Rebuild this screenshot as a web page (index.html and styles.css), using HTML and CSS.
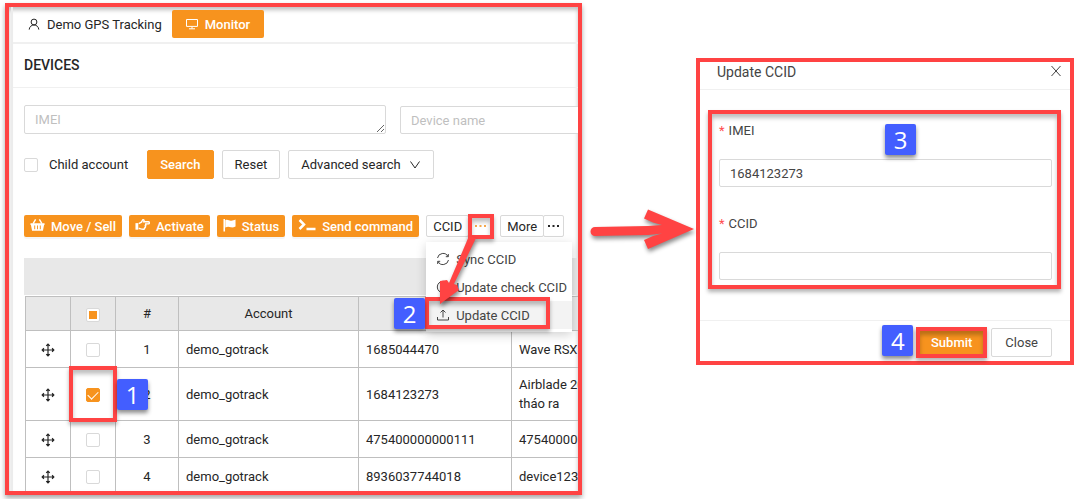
FILE: index.html
```html
<!DOCTYPE html>
<html lang="en">
<head>
<meta charset="utf-8">
<title>Update CCID guide</title>
<link rel="stylesheet" href="styles.css">
</head>
<body>
<main class="guide">
  <section class="panel">
    <div class="page">
      <nav class="tabs">
        <a class="tab" href="#account"><svg class="icon" viewBox="0 0 12 12"><circle cx="6" cy="4" r="2.9"/><path d="M1.2 11.6C1.4 8.8 3.4 7 6 7s4.6 1.8 4.8 4.6"/></svg>Demo GPS Tracking</a>
        <a class="tab tab-active" href="#monitor"><svg class="icon" viewBox="0 0 12 12"><path d="M.5 1.500h11v6.900H.5zM6 8.400v2.200M3 10.800h6"/></svg>Monitor</a>
      </nav>
      <h1 class="heading">DEVICES</h1>
      <div class="content">
        <form class="filters">
          <div class="fields">
            <textarea class="control area" rows="1" placeholder="IMEI" aria-label="IMEI"></textarea>
            <input class="control name" type="text" placeholder="Device name" aria-label="Device name">
          </div>
          <div class="actions">
            <label class="child"><input class="check" type="checkbox">Child account</label>
            <button class="btn btn-primary" type="button">Search</button>
            <button class="btn" type="button">Reset</button>
            <button class="btn" type="button">Advanced search<svg class="icon" viewBox="0 0 12 12"><path d="M1.500 2.500 6 9l4.500-6.500"/></svg></button>
          </div>
        </form>
        <div class="toolbar">
          <button class="tool" type="button"><svg class="glyph" viewBox="0 0 16 14"><path d="M.5 5h15v2H15l-1.200 6H2.200L1 7H.5z"/><path class="edge" d="M3.300 5.500 6 1M12.700 5.500 10 1"/><path class="slot" d="M5 7.500v4M8 7.500v4M11 7.500v4"/></svg>Move / Sell</button>
          <button class="tool" type="button"><svg class="glyph" viewBox="0 0 16 14"><path d="M.5 5h3v7h-3z"/><path class="edge" d="M4 5.500 6.800 4l1.500-2.600c1.500-.4 1.600 1 1 2.200h5c1.300 0 1.300 2.200 0 2.200h-3.500c1.200.6 1 1.800.1 2.200.6.8.3 1.700-.6 2 .1 1-.5 1.500-1.500 1.500-2 0-3-.5-4.800-1"/></svg>Activate</button>
          <button class="tool" type="button"><svg class="glyph glyph-flag" viewBox="0 0 14 14"><path d="M2.500 2C5 .4 7 3 9 2.300c1.500-.2 2.700-.6 4.500-1.300v7.500c-2 1-3.500 1.400-5 1-2-.8-3.700-1-6 .2zM.5.5h1.700V14H.5z"/></svg>Status</button>
          <button class="tool" type="button"><svg class="glyph glyph-prompt" viewBox="0 0 18 14"><path class="thick" d="M1.500 2 6 6.500l-4.500 4.500M8.500 11h9"/></svg>Send command</button>
          <div class="split">
            <button class="mini" type="button">CCID</button><button class="mini mini-dots mini-open" type="button" aria-label="CCID actions"><svg class="dots" viewBox="0 0 11 2"><path d="M0 0h2v2H0zM4.500 0h2v2h-2zM9 0h2v2H9z"/></svg></button>
            <span class="mark mark-dots"></span>
            <ul class="menu">
              <li><button class="entry" type="button"><svg class="icon icon-lg" viewBox="0 0 14 14"><path d="M1.500 6A5.600 5.600 0 0 1 12 4.500M12.500 8A5.600 5.600 0 0 1 2 9.500M12.300 2v2.700H9.800M1.700 12V9.300h2.500"/></svg>Sync CCID</button></li>
              <li><button class="entry" type="button"><svg class="icon icon-lg" viewBox="0 0 14 14"><circle cx="7" cy="7" r="5.700"/><path d="M7 3.500V7l2.500 1.500"/></svg>Update check CCID</button></li>
              <li class="chosen"><button class="entry" type="button"><svg class="icon icon-lg" viewBox="0 0 14 14"><path d="M1.500 9v3h11V9M7 9.500V2M4.500 4.500 7 2l2.500 2.500"/></svg>Update CCID</button><span class="mark mark-entry"></span><span class="badge badge-2">2</span></li>
            </ul>
            <svg class="arrow-down" viewBox="0 0 46 70"><path d="M38 0 18 47l-2-3-7 1 0 23 19-14-2-5-3-1L45 2z"/></svg>
          </div>
          <div class="split">
            <button class="mini" type="button">More</button><button class="mini mini-dots" type="button" aria-label="More actions"><svg class="dots" viewBox="0 0 11 2"><path d="M0 0h2v2H0zM4.500 0h2v2h-2zM9 0h2v2H9z"/></svg></button>
          </div>
        </div>
        <div class="strip"></div>
        <table class="devices">
          <colgroup><col class="c-move"><col class="c-check"><col class="c-num"><col class="c-account"><col class="c-imei"><col class="c-name"></colgroup>
          <thead>
            <tr><th></th><th><input class="check check-some" type="checkbox" aria-label="Select all"></th><th>#</th><th>Account</th><th></th><th></th></tr>
          </thead>
          <tbody>
            <tr><td class="mid"><svg class="move" viewBox="0 0 12 12"><path d="M6 1v10M1 6h10M4.500 2.500 6 1l1.500 1.500M4.500 9.500 6 11l1.500-1.500M2.500 4.500 1 6l1.500 1.500M9.500 4.500 11 6 9.500 7.500"/></svg></td><td class="mid"><input class="check" type="checkbox" aria-label="Select row 1"></td><td class="mid">1</td><td>demo_gotrack</td><td>1685044470</td><td>Wave RSX</td></tr>
            <tr><td class="mid"><svg class="move" viewBox="0 0 12 12"><path d="M6 1v10M1 6h10M4.500 2.500 6 1l1.500 1.500M4.500 9.500 6 11l1.500-1.500M2.500 4.500 1 6l1.500 1.500M9.500 4.500 11 6 9.500 7.500"/></svg></td><td class="mid picked"><input class="check" type="checkbox" checked aria-label="Select row 2"><span class="mark mark-check"></span><span class="badge badge-1">1</span></td><td class="mid">2</td><td>demo_gotrack</td><td>1684123273</td><td>Airblade 20<br>tháo ra</td></tr>
            <tr><td class="mid"><svg class="move" viewBox="0 0 12 12"><path d="M6 1v10M1 6h10M4.500 2.500 6 1l1.500 1.500M4.500 9.500 6 11l1.500-1.500M2.500 4.500 1 6l1.500 1.500M9.500 4.500 11 6 9.500 7.500"/></svg></td><td class="mid"><input class="check" type="checkbox" aria-label="Select row 3"></td><td class="mid">3</td><td>demo_gotrack</td><td>475400000000111</td><td>475400000</td></tr>
            <tr><td class="mid"><svg class="move" viewBox="0 0 12 12"><path d="M6 1v10M1 6h10M4.500 2.500 6 1l1.500 1.500M4.500 9.500 6 11l1.500-1.500M2.500 4.500 1 6l1.500 1.500M9.500 4.500 11 6 9.500 7.500"/></svg></td><td class="mid"><input class="check" type="checkbox" aria-label="Select row 4"></td><td class="mid">4</td><td>demo_gotrack</td><td>8936037744018</td><td>device1234</td></tr>
          </tbody>
        </table>
      </div>
    </div>
  </section>

  <svg class="arrow-right" viewBox="0 0 114 50"><path d="M13 23 66 22l14-1-9-2.500-9-4 4-9L112 25 66 45l-4-9 9-4 9-2.500-14 1.500-53 1a4.500 4.500 0 0 1 0-9z"/></svg>

  <form class="dialog">
    <header class="dialog-head"><h2 class="dialog-title">Update CCID</h2><button class="close" type="button" aria-label="Close dialog"><svg class="icon" viewBox="0 0 12 12"><path d="m1.500 1 9 10M10.500 1l-9 10"/></svg></button></header>
    <div class="dialog-body">
      <label class="label" for="imei"><span class="star">*</span>IMEI</label>
      <input class="control" id="imei" type="text" value="1684123273">
      <label class="label" for="ccid"><span class="star">*</span>CCID</label>
      <input class="control" id="ccid" type="text">
      <span class="mark mark-fields"></span>
      <span class="badge badge-3">3</span>
    </div>
    <footer class="dialog-foot">
      <div class="submit"><button class="btn btn-primary" type="button">Submit</button><span class="mark mark-submit"></span><span class="badge badge-4">4</span></div>
      <button class="btn" type="button">Close</button>
    </footer>
  </form>
</main>
</body>
</html>
```
FILE: styles.css
```css
* { box-sizing: border-box; }
body { margin: 0; background: #fff; color: #262626; font: 13px/19px Roboto, "Noto Sans", sans-serif; }
button, input, textarea { font: inherit; color: inherit; }
.guide { display: flex; align-items: flex-start; padding: 3px 17px 4px 5px; }
.icon { width: 12px; height: 12px; flex: none; fill: none; stroke: currentColor; stroke-width: 1; }
.icon-lg { width: 14px; height: 14px; }

/* Devices page */
.panel { flex: 567 1 0; min-width: 0; overflow: hidden; padding-left: 2px; border: 4px solid #ff4343; box-shadow: 0 3px 5px rgba(0,0,0,.35), inset 0 3px 4px rgba(0,0,0,.25); }
.page { border-left: 2px solid #ececec; }
.tabs { display: flex; align-items: flex-start; padding: 3px 15px 4px; border-bottom: 2px solid #f0f0f0; }
.tab { display: flex; align-items: center; gap: 7px; height: 28px; padding: 0 10px 0 0; color: inherit; text-decoration: none; }
.tab-active { padding: 0 14px; border-radius: 2px; background: #f7931e; color: #fff; font-weight: 500; }
.heading { margin: 0; padding: 12px 11px; border-bottom: 1px solid #f0f0f0; font-size: 14px; line-height: 19px; font-weight: 500; }
.content { padding: 17px 0 0 11px; }
.fields { display: flex; align-items: flex-end; gap: 14px; }
.control { display: block; width: 100%; height: 28px; padding: 4px 10px; border: 1px solid #d9d9d9; border-radius: 2px; background: #fff; line-height: 18px; outline: 0; }
.control::placeholder { color: #bfbfbf; }
.area { flex: 0 0 362px; height: 29px; padding-top: 5px; overflow: hidden; resize: vertical; }
.name { flex: 0 0 362px; }
.actions { display: flex; align-items: center; gap: 8px; padding-top: 16px; }
.actions .btn { padding: 0 12px; }
.child { display: flex; align-items: center; gap: 11px; margin-right: 11px; }
.check { appearance: none; display: inline-grid; place-items: center; width: 14px; height: 14px; margin: 0; border: 1px solid #d9d9d9; border-radius: 2px; background: #fff; vertical-align: middle; }
.check:checked { border-color: #f7931e; background: #f7931e; }
.check:checked::after { content: ""; width: 5px; height: 9px; margin-bottom: 3px; border: solid #fff; border-width: 0 1px 1px 0; transform: rotate(45deg); }
.check-some::after { content: ""; width: 8px; height: 8px; background: #f7931e; }
.btn { display: flex; align-items: center; gap: 8px; height: 29px; padding: 0 13px; border: 1px solid #d9d9d9; border-radius: 2px; background: #fff; }
.btn-primary { border-color: #f7931e; background: #f7931e; color: #fff; font-weight: 500; }

.toolbar { display: flex; gap: 7px; padding: 36px 0 21px; white-space: nowrap; }
.tool, .mini { display: flex; align-items: center; height: 22px; border-radius: 2px; }
.tool { gap: 6px; padding: 0 6px; border: 0; background: #f7931e; color: #fff; font-weight: 500; box-shadow: 0 2px 0 rgba(0,0,0,.04); }
.glyph { width: 15px; height: 14px; margin-bottom: 3px; fill: currentColor; }
.edge, .thick { fill: none; stroke: currentColor; stroke-width: 1.5; }
.thick { stroke-width: 2.5; }
.slot { fill: none; stroke: #f7931e; }
.glyph-flag { width: 13px; }
.glyph-prompt { width: 18px; }
.split { position: relative; display: flex; }
.mini { padding: 0 6px; border: 1px solid #d9d9d9; background: #fff; }
.mini-dots { margin-left: -1px; padding: 0 4px; }
.mini-open { color: #f7a94d; }
.mini-open { padding: 0 6px; }
.dots { width: 11px; height: 2px; fill: currentColor; }
.menu { position: absolute; z-index: 2; top: 27px; left: 0; margin: 0; padding: 3px 0; list-style: none; background: #fff; box-shadow: 0 3px 10px rgba(0,0,0,.18); }
.menu li { position: relative; }
.entry { display: flex; align-items: center; gap: 6px; width: 100%; height: 28px; padding: 0 5px 0 10px; border: 0; background: none; color: #444; }
.chosen { background: #f3f3f3; }

.strip { height: 37px; margin-bottom: 1px; background: #e8e8e8; }
.devices { width: 700px; margin: 0 0 -4px 1px; border-collapse: collapse; table-layout: fixed; }
.c-move, .c-check { width: 45px; }
.c-num { width: 63px; }
.c-account { width: 180px; }
.c-imei { width: 153px; }
.devices th, .devices td { height: 37px; padding: 7px; border: 1px solid #bfbfbf; text-align: left; }
.devices th { height: 34px; background: #e8e8e8; font-weight: 400; }
.devices th, .devices .mid { padding: 0; text-align: center; }
.devices .picked { position: relative; }
.move { width: 14px; height: 14px; fill: none; stroke: #222; stroke-width: 1; vertical-align: middle; }

/* Dialog */
.dialog { flex: 370 1 0; min-width: 0; margin-top: 55px; border: 4px solid #ff4343; color: #444; }
.dialog-head { display: flex; align-items: flex-start; justify-content: space-between; height: 28px; padding: 0 8px 0 17px; border-bottom: 1px solid #f0f0f0; }
.dialog-title { margin: 0; font-size: 14px; line-height: 20px; font-weight: 400; }
.close { display: flex; padding: 3px 0; border: 0; background: none; }
.dialog-body { position: relative; display: grid; padding: 30px 18px 40px 19px; }
.label { display: flex; align-items: center; gap: 4px; height: 20px; margin-bottom: 19px; }
.dialog-body .control + .label { margin-top: 26px; margin-bottom: 19px; }
.star { color: #ff4d4f; }
.dialog-foot { display: flex; justify-content: flex-end; gap: 5px; padding: 7px 18px 4px; border-top: 1px solid #f0f0f0; }
.submit { position: relative; }

/* Callouts drawn over the interface */
.mark { position: absolute; z-index: 3; border: 4px solid #ff4343; box-shadow: 0 3px 4px rgba(0,0,0,.3), inset 0 4px 4px rgba(0,0,0,.25); pointer-events: none; }
.mark-dots { top: -1px; right: -1px; width: 26px; height: 25px; }
.mark-entry { top: -4px; right: 22px; left: -1px; height: 32px; }
.mark-check { inset: -2px; }
.mark-fields { inset: 20px 9px 31px 8px; }
.mark-submit { inset: -1px; }
.badge { position: absolute; z-index: 4; width: 31px; height: 31px; border-radius: 2px; background: #435eff; box-shadow: 0 3px 4px rgba(0,0,0,.45); color: #fff; font: 24px/31px "Open Sans", sans-serif; text-align: center; }
.badge-1 { top: 11px; left: 46px; }
.badge-2 { top: -3px; left: -32px; }
.badge-3 { top: 34px; left: 50%; }
.badge-4 { top: -3px; right: 73px; }
.arrow-down, .arrow-right { fill: #ff4343; filter: drop-shadow(1px 3px 2px rgba(0,0,0,.45)); pointer-events: none; }
.arrow-down { position: absolute; z-index: 5; top: 21px; left: 5px; width: 46px; height: 70px; }
.arrow-right { flex: none; width: 114px; height: 50px; margin-top: 201px; }
```
